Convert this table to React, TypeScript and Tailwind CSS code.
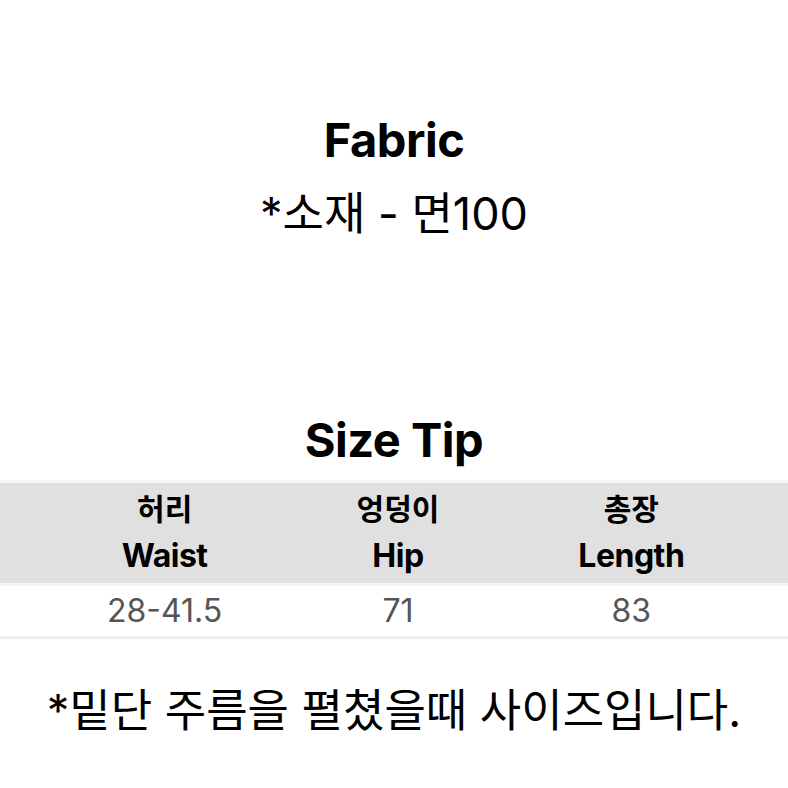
export default function App() {
  const cols = [
    { ko: '허리', en: 'Waist', val: '28-41.5' },
    { ko: '엉덩이', en: 'Hip', val: '71' },
    { ko: '총장', en: 'Length', val: '83' },
  ];
  const font = { fontFamily: 'Inter, "Noto Sans CJK KR", sans-serif' };

  return (
    <div className="w-[788px] h-[788px] bg-white text-black overflow-hidden" style={font}>
      {/* Fabric */}
      <div className="pt-[111px] flex flex-col items-center">
        <h2 className="text-[47px] font-bold leading-[58px] tracking-[-0.5px]">Fabric</h2>
        <p className="mt-[18px] text-[45px] leading-[54px]">*소재 - 면100</p>
      </div>

      {/* Size Tip */}
      <div className="mt-[170px] flex flex-col items-center">
        <h2 className="text-[47px] font-bold leading-[58px] tracking-[-0.5px]">Size Tip</h2>
      </div>
      <div className="mt-[11px] border-t-[3px] border-[#f4f4f4] bg-[#e0e0e0]">
        <div className="grid grid-cols-3 pl-[48px] pr-[40px] h-[100px] pt-[6px]">
          {cols.map((c) => (
            <div key={c.en} className="flex flex-col items-center">
              <span className="text-[30px] font-bold leading-[40px]">{c.ko}</span>
              <span className="text-[32px] font-bold leading-[54px] tracking-[-0.5px]">{c.en}</span>
            </div>
          ))}
        </div>
      </div>
      <div className="border-t-[3px] border-[#f4f4f4] border-b-[3px] border-b-[#eeeeee]">
        <div className="grid grid-cols-3 pl-[48px] pr-[40px] h-[50px] items-center">
          {cols.map((c) => (
            <span key={c.en} className="text-center text-[32px] leading-[40px] text-[#555555]">
              {c.val}
            </span>
          ))}
        </div>
      </div>

      <p className="mt-[44px] text-center text-[45px] leading-[56px]">*밑단 주름을 펼쳤을때 사이즈입니다.</p>
    </div>
  );
}
